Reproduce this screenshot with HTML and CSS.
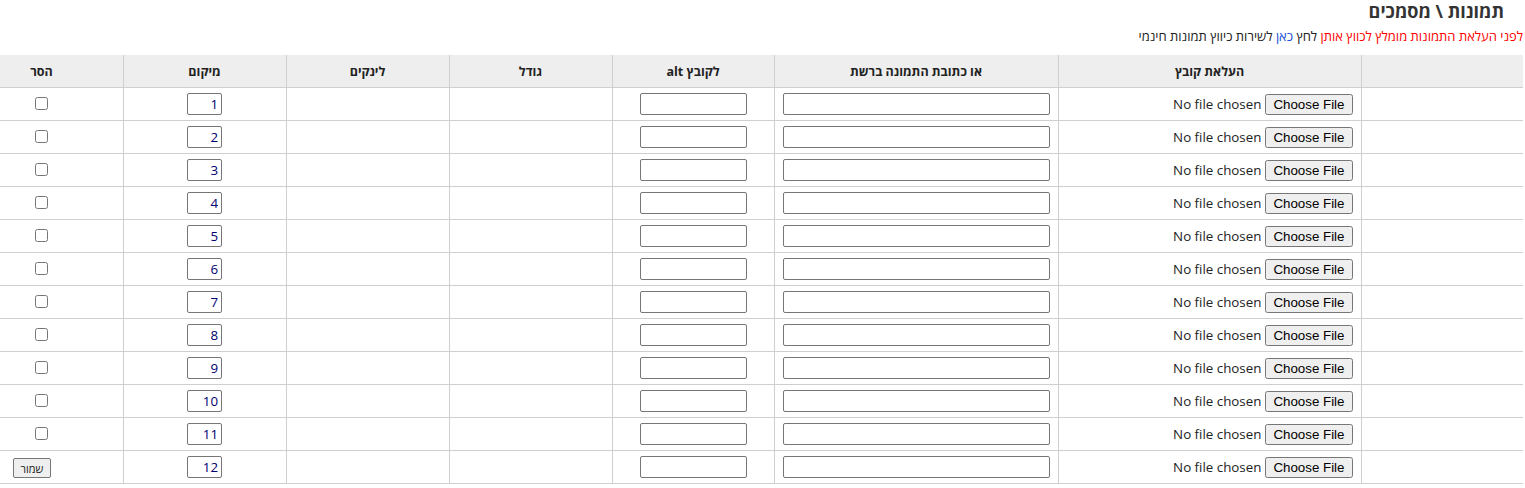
FILE: index.html
```html
<!DOCTYPE html>
<html lang="he" dir="rtl">
<head>
<meta charset="utf-8">
<title>תמונות \ מסמכים</title>
<link rel="stylesheet" href="styles.css">
</head>
<body>
<h1 class="title">תמונות \ מסמכים</h1>
<p class="info"><span class="warn">לפני העלאת התמונות מומלץ לכווץ אותן</span> לחץ <a class="link" href="#">כאן</a> לשירות כיווץ תמונות חינמי</p>
<div class="grid-wrap">
<table class="grid">
<colgroup>
<col class="c-blank"><col class="c-file"><col class="c-url"><col class="c-alt"><col class="c-size"><col class="c-links"><col class="c-pos"><col class="c-del">
</colgroup>
<thead>
<tr><th></th><th>העלאת קובץ</th><th>או כתובת התמונה ברשת</th><th>לקובץ alt</th><th>גודל</th><th>לינקים</th><th>מיקום</th><th>הסר</th></tr>
</thead>
<tbody>
<tr><td></td><td class="file-cell"><input type="file" class="file"></td><td class="mid"><input type="text" class="url"></td><td class="mid"><input type="text" class="alt"></td><td></td><td></td><td class="mid"><input type="text" class="pos" value="1"></td><td class="mid"><input type="checkbox" class="chk"></td></tr>
<tr><td></td><td class="file-cell"><input type="file" class="file"></td><td class="mid"><input type="text" class="url"></td><td class="mid"><input type="text" class="alt"></td><td></td><td></td><td class="mid"><input type="text" class="pos" value="2"></td><td class="mid"><input type="checkbox" class="chk"></td></tr>
<tr><td></td><td class="file-cell"><input type="file" class="file"></td><td class="mid"><input type="text" class="url"></td><td class="mid"><input type="text" class="alt"></td><td></td><td></td><td class="mid"><input type="text" class="pos" value="3"></td><td class="mid"><input type="checkbox" class="chk"></td></tr>
<tr><td></td><td class="file-cell"><input type="file" class="file"></td><td class="mid"><input type="text" class="url"></td><td class="mid"><input type="text" class="alt"></td><td></td><td></td><td class="mid"><input type="text" class="pos" value="4"></td><td class="mid"><input type="checkbox" class="chk"></td></tr>
<tr><td></td><td class="file-cell"><input type="file" class="file"></td><td class="mid"><input type="text" class="url"></td><td class="mid"><input type="text" class="alt"></td><td></td><td></td><td class="mid"><input type="text" class="pos" value="5"></td><td class="mid"><input type="checkbox" class="chk"></td></tr>
<tr><td></td><td class="file-cell"><input type="file" class="file"></td><td class="mid"><input type="text" class="url"></td><td class="mid"><input type="text" class="alt"></td><td></td><td></td><td class="mid"><input type="text" class="pos" value="6"></td><td class="mid"><input type="checkbox" class="chk"></td></tr>
<tr><td></td><td class="file-cell"><input type="file" class="file"></td><td class="mid"><input type="text" class="url"></td><td class="mid"><input type="text" class="alt"></td><td></td><td></td><td class="mid"><input type="text" class="pos" value="7"></td><td class="mid"><input type="checkbox" class="chk"></td></tr>
<tr><td></td><td class="file-cell"><input type="file" class="file"></td><td class="mid"><input type="text" class="url"></td><td class="mid"><input type="text" class="alt"></td><td></td><td></td><td class="mid"><input type="text" class="pos" value="8"></td><td class="mid"><input type="checkbox" class="chk"></td></tr>
<tr><td></td><td class="file-cell"><input type="file" class="file"></td><td class="mid"><input type="text" class="url"></td><td class="mid"><input type="text" class="alt"></td><td></td><td></td><td class="mid"><input type="text" class="pos" value="9"></td><td class="mid"><input type="checkbox" class="chk"></td></tr>
<tr><td></td><td class="file-cell"><input type="file" class="file"></td><td class="mid"><input type="text" class="url"></td><td class="mid"><input type="text" class="alt"></td><td></td><td></td><td class="mid"><input type="text" class="pos" value="10"></td><td class="mid"><input type="checkbox" class="chk"></td></tr>
<tr><td></td><td class="file-cell"><input type="file" class="file"></td><td class="mid"><input type="text" class="url"></td><td class="mid"><input type="text" class="alt"></td><td></td><td></td><td class="mid"><input type="text" class="pos" value="11"></td><td class="mid"><input type="checkbox" class="chk"></td></tr>
<tr><td></td><td class="file-cell"><input type="file" class="file"></td><td class="mid"><input type="text" class="url"></td><td class="mid"><input type="text" class="alt"></td><td></td><td></td><td class="mid"><input type="text" class="pos" value="12"></td><td class="save-cell"><button type="button" class="save">שמור</button></td></tr>
</tbody>
</table>
</div>
</body>
</html>
```

FILE: styles.css
```css
html, body {
  margin: 0;
  padding: 0;
  background: #fff;
}
body {
  direction: rtl;
  font-family: "Open Sans", "Liberation Sans", "DejaVu Sans", sans-serif;
  color: #222;
}
.title {
  margin: 0;
  padding: 1px 21px 0 0;
  font-size: 18px;
  line-height: 20px;
  font-weight: bold;
  color: #333;
}
.info {
  margin: 7px 2px 0 0;
  font-size: 13px;
  line-height: 16px;
  color: #222;
}
.warn { color: #f00; }
.link { color: #1a4fd6; text-decoration: none; }
.grid-wrap {
  overflow: hidden;
  margin-top: 11px;
  padding-right: 2px;
}
.grid {
  width: 1563px;
  table-layout: fixed;
  border-collapse: collapse;
  border-spacing: 0;
}
.c-blank { width: 162px; }
.c-file { width: 303px; }
.c-url { width: 284px; }
.c-alt { width: 162px; }
.c-size, .c-links, .c-pos, .c-del { width: 163px; }
.grid th, .grid td {
  height: 32px;
  padding: 0;
  border-bottom: 1px solid #cfcfcf;
  border-left: 1px solid #cfcfcf;
  vertical-align: middle;
}
.grid th {
  background: #eee;
  font-size: 12.5px;
  font-weight: bold;
  color: #222;
  text-align: center;
}
.mid { text-align: center; }
.file-cell { text-align: right; padding-right: 8px !important; }
.grid input[type="text"] {
  box-sizing: border-box;
  height: 22px;
  margin: 0 0 1px;
  border: 1px solid #767676;
  border-radius: 2px;
  padding: 1px 3px;
  font-family: "Open Sans", "Liberation Sans", sans-serif;
  font-size: 13.3px;
  vertical-align: middle;
}
.url { width: 267px; }
.alt { width: 107px; }
.pos { width: 35px; color: #000070; text-align: right; }
.chk { margin: 0 0 4px; width: 13px; height: 13px; vertical-align: middle; }
.file {
  font-family: "Open Sans", "Liberation Sans", sans-serif;
  font-size: 13.33px;
  color: #222;
  margin-bottom: 1px;
  vertical-align: middle;
}
.save-cell { text-align: left; padding-left: 52px !important; }
.save {
  font-family: "Open Sans", "Liberation Sans", sans-serif;
  font-size: 11px;
  height: 20px;
  padding: 0 7px;
  margin-top: 2px;
  border: 1px solid #767676;
  border-radius: 2px;
  background: #efefef;
  color: #222;
}
```
